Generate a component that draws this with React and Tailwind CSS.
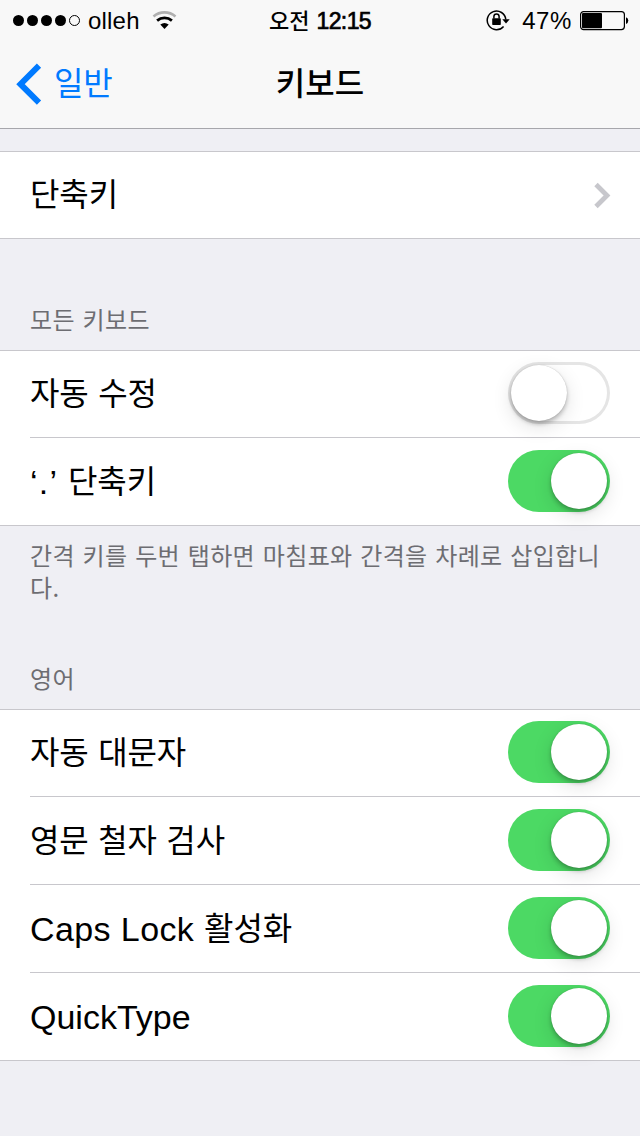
import React from "react";

const KO = "font-['Noto_Sans_CJK_KR',sans-serif]";
const EN = "font-['Liberation_Sans',sans-serif]";

function Toggle({ on = false }) {
  return (
    <span
      role="switch"
      aria-checked={on}
      className={
        on
          ? "flex h-[62px] w-[102px] shrink-0 items-center justify-end rounded-full bg-[#4cd964] p-[3px]"
          : "flex h-[62px] w-[102px] shrink-0 items-center rounded-full bg-white p-[3px] shadow-[inset_0_0_0_3px_#e5e5e5]"
      }
    >
      <span className="size-14 rounded-full bg-white shadow-[0_0_1px_rgba(0,0,0,0.25),0_3px_4px_rgba(0,0,0,0.24),0_6px_20px_rgba(0,0,0,0.12)]" />
    </span>
  );
}

function Ko({ children }) {
  return (
    <span className={`${KO} text-[32px] leading-none tracking-[-0.1px] [word-spacing:2.4px]`}>
      {children}
    </span>
  );
}

function En({ children }) {
  return <span className={`${EN} align-[-1px] text-[34px] leading-none`}>{children}</span>;
}

function Row({ children, control, first, last }) {
  return (
    <li className={first || last ? "flex h-[87px] pl-[30px]" : "flex h-[88px] pl-[30px]"}>
      <div
        className={
          last
            ? "flex grow items-center justify-between pr-[30px] pb-[2px]"
            : "flex grow items-center justify-between border-b border-[#c8c7cc] pr-[30px] pb-[2px]"
        }
      >
        <div className="whitespace-pre">{children}</div>
        {control}
      </div>
    </li>
  );
}

function Group({ children }) {
  return <ul className="border-y border-[#c8c7cc] bg-white">{children}</ul>;
}

function StatusBar() {
  return (
    <div className={`grid h-10 grid-cols-[1fr_auto_1fr] items-center text-2xl leading-none ${EN}`}>
      <div className="flex items-center pl-[13px]">
        <svg width="68" height="12" viewBox="0 0 68 12">
          <circle cx="5.5" cy="6.5" r="5.5" />
          <circle cx="19.5" cy="6.5" r="5.5" />
          <circle cx="33.5" cy="6.5" r="5.5" />
          <circle cx="47.5" cy="6.5" r="5.5" />
          <circle cx="61.5" cy="6.5" r="5" fill="none" stroke="#000" />
        </svg>
        <span className="ml-[7px] pt-[2px] tracking-[0.2px]">olleh</span>
        <svg className="ml-[12px]" width="26" height="20" viewBox="0 0 26 20" fill="none">
          <path d="M1.5 6.4a17 17 0 0 1 22 0" stroke="#b0b0b0" strokeWidth="2.6" />
          <path d="M5.1 10.6a11.5 11.5 0 0 1 14.8 0" stroke="#000" strokeWidth="2.8" />
          <path d="M8.3 14.6a7 7 0 0 1 8.4 0L12.5 18.9z" fill="#000" />
        </svg>
      </div>
      <div className="flex items-center">
        <span className={`${KO} pb-[3px] text-[22px] font-medium`}>오전</span>
        <span className="ml-[7px] pt-[2px] text-[23px] tracking-[-0.6px] [-webkit-text-stroke:0.7px_black]">
          12:15
        </span>
      </div>
      <div className="flex items-center justify-end pr-[10px]">
        <svg width="24" height="22" viewBox="0 0 24 22" fill="none">
          <path d="M17.6 17.4A9.3 9.3 0 1 1 19.8 10.5" stroke="#000" strokeWidth="1.5" />
          <path d="M16.3 10.2h7.4L20 14.5z" fill="#000" />
          <rect x="6.2" y="9.3" width="8.6" height="6.6" rx="0.7" fill="#000" />
          <path d="M7.9 9.5V7.6a2.6 2.6 0 0 1 5.2 0v1.9" stroke="#000" strokeWidth="1.5" />
        </svg>
        <span className="ml-[12px] pt-[2px] tracking-[0.6px]">47%</span>
        <svg className="mt-px ml-[8px]" width="50" height="20" viewBox="0 0 50 20" fill="none">
          <rect x="0.6" y="0.6" width="43.8" height="18" rx="3" stroke="#000" strokeWidth="1.2" />
          <rect x="2" y="2" width="20" height="15.2" rx="1" fill="#000" />
          <path d="M46 6.2q2.3.8 2.3 3.4T46 13z" fill="#000" />
        </svg>
      </div>
    </div>
  );
}

export default function App() {
  return (
    <main className="flex h-[1136px] w-[640px] flex-col overflow-hidden bg-[#efeff4] text-black">
      <header className="h-[129px] border-b border-[#a7a7ac] bg-[#f8f8f8]">
        <StatusBar />
        <nav className="grid h-[88px] grid-cols-[1fr_auto_1fr] items-center">
          <a className="flex items-center pl-4 text-[#007aff]">
            <svg width="26" height="42" viewBox="0 0 26 42" fill="none">
              <path d="M23 2.7L4.5 21.2L23 39.7" stroke="currentColor" strokeWidth="6" />
            </svg>
            <span className={`ml-3 pb-[6px] ${KO} text-[32px] leading-none tracking-[-0.1px]`}>일반</span>
          </a>
          <h1 className={`${KO} pb-[6px] text-[32px] leading-none font-medium`}>키보드</h1>
        </nav>
      </header>

      <section className="mt-[22px]">
        <Group>
          <li className="flex h-[86px] items-center justify-between pr-[29px] pl-[30px]">
            <div className="pb-[3px]">
              <Ko>단축키</Ko>
            </div>
            <svg width="18" height="28" viewBox="0 0 18 28" fill="none">
              <path d="M3 3.5l11 11-11 11" stroke="#c7c7cc" strokeWidth="4.8" />
            </svg>
          </li>
        </Group>
      </section>

      <section className="mt-[63px]">
        <h2 className={`h-12 pl-[30px] ${KO} text-2xl leading-[34px] tracking-[0.35px] text-[#6d6d72] [word-spacing:2px]`}>
          모든 키보드
        </h2>
        <Group>
          <Row first control={<Toggle />}>
            <Ko>자동 수정</Ko>
          </Row>
          <Row last control={<Toggle on />}>
            <span className="tracking-[1.3px]">
              <En>‘.’ </En>
            </span>
            <Ko>단축키</Ko>
          </Row>
        </Group>
        <p className={`mt-[13px] pl-[30px] ${KO} text-2xl leading-8 tracking-[0.35px] whitespace-nowrap text-[#6d6d72] [word-spacing:2px]`}>
          간격 키를 두번 탭하면 마침표와 간격을 차례로 삽입합니
          <br />
          다.
        </p>
      </section>

      <section className="mt-[58px]">
        <h2 className={`h-12 pl-[30px] ${KO} text-2xl leading-[34px] tracking-[0.3px] text-[#6d6d72]`}>영어</h2>
        <Group>
          <Row first control={<Toggle on />}>
            <Ko>자동 대문자</Ko>
          </Row>
          <Row control={<Toggle on />}>
            <Ko>영문 철자 검사</Ko>
          </Row>
          <Row control={<Toggle on />}>
            <span className="tracking-[0.4px]">
              <En>Caps Lock </En>
            </span>
            <Ko>활성화</Ko>
          </Row>
          <Row last control={<Toggle on />}>
            <div className="pt-[2px]">
              <En>QuickType</En>
            </div>
          </Row>
        </Group>
      </section>
    </main>
  );
}
